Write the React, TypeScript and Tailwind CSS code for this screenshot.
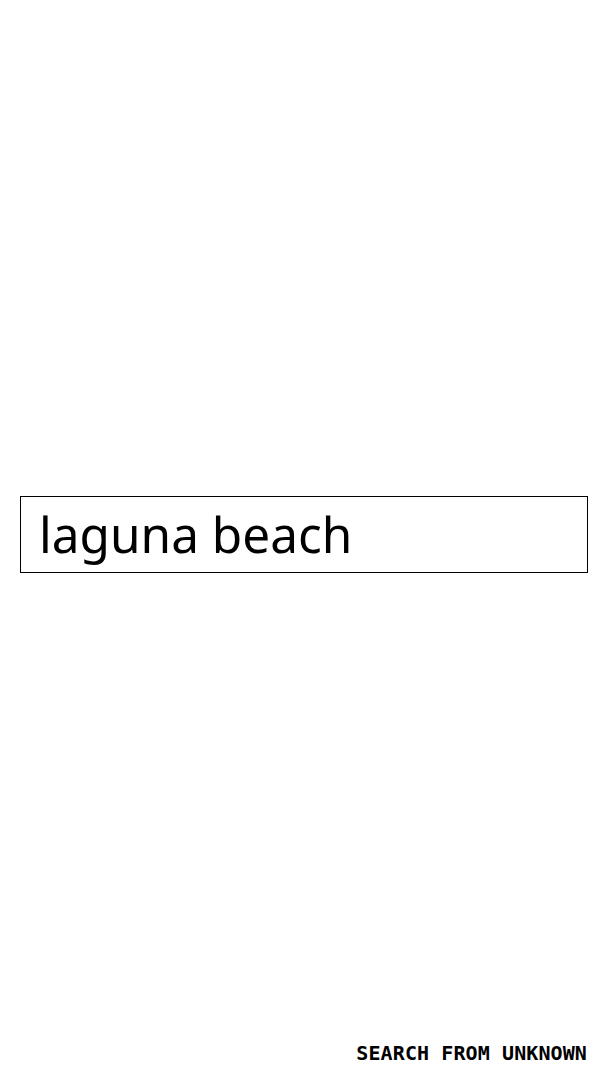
import React from "react";

export default function App() {
  return (
    <div className="h-screen w-full bg-white flex flex-col">
      <main className="flex-1 flex items-center px-5 pt-[30px]">
        <div className="w-full h-[77px] border-[1.5px] border-black flex items-center px-[18px]">
          <span
            className="text-[49.5px] leading-none text-black"
            style={{ fontFamily: '"Noto Sans", sans-serif' }}
          >
            laguna beach
          </span>
        </div>
      </main>
      <footer className="flex justify-end pl-5 pr-[21px] pb-[13px]">
        <span
          className="text-[20px] leading-7 font-bold text-black tracking-[0.1px]"
          style={{ fontFamily: '"DejaVu Sans Mono", monospace' }}
        >
          SEARCH FROM UNKNOWN
        </span>
      </footer>
    </div>
  );
}
